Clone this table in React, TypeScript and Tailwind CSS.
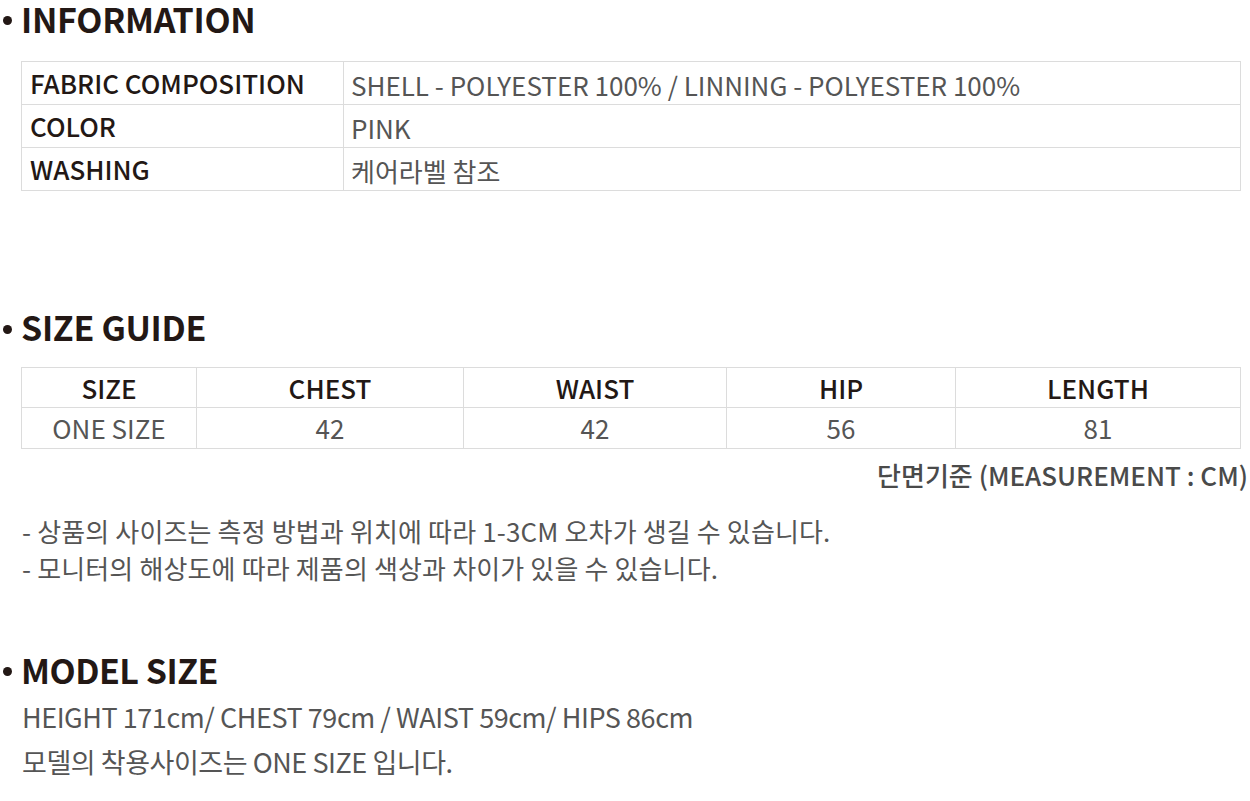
import React from "react";

const font = { fontFamily: '"Noto Sans CJK KR", "Noto Sans", sans-serif' };

function Heading({ children }: { children: React.ReactNode }) {
    return (
        <h2 className="flex items-center text-[34px] font-bold leading-[1.1] text-[#231815]">
            <span className="ml-[3px] mr-[9px] mt-[4px] inline-block h-[9px] w-[9px] shrink-0 rounded-full bg-[#231815]" />
            {children}
        </h2>
    );
}

const info = [
    ["FABRIC COMPOSITION", "SHELL - POLYESTER 100% / LINNING - POLYESTER 100%"],
    ["COLOR", "PINK"],
    ["WASHING", "케어라벨 참조"],
];

const sizeCols = [
    { label: "SIZE", value: "ONE SIZE", w: "w-[175px]" },
    { label: "CHEST", value: "42", w: "w-[267px]" },
    { label: "WAIST", value: "42", w: "w-[263px]" },
    { label: "HIP", value: "56", w: "w-[229px]" },
    { label: "LENGTH", value: "81", w: "flex-1" },
];

export default function App() {
    return (
        <div className="min-h-screen w-[1250px] bg-white" style={font}>
            <Heading>
                <span className="tracking-[-0.3px]">INFORMATION</span>
            </Heading>

            <table className="ml-[21px] mt-[24px] w-[1220px] border-collapse border border-[#dcdcdc]">
                <tbody>
                    {info.map(([k, v]) => (
                        <tr key={k} className="h-[43px]">
                            <td className="w-[322px] border border-[#dcdcdc] pl-[8px] text-[26px] font-medium leading-none text-[#231815]">
                                {k}
                            </td>
                            <td className="border border-[#dcdcdc] pl-[7px] pt-[4px] text-[26px] leading-none text-[#555]">
                                {v}
                            </td>
                        </tr>
                    ))}
                </tbody>
            </table>

            <div className="mt-[117px]">
                <Heading>
                    <span className="tracking-[-0.3px]">SIZE GUIDE</span>
                </Heading>
            </div>

            <div className="ml-[21px] mt-[21px] w-[1220px] border-l border-t border-[#dcdcdc]">
                <div className="flex h-[40px]">
                    {sizeCols.map((c) => (
                        <div
                            key={c.label}
                            className={`${c.w} flex items-center justify-center border-b border-r border-[#dcdcdc] text-[26px] font-medium text-[#231815]`}
                        >
                            {c.label}
                        </div>
                    ))}
                </div>
                <div className="flex h-[41px]">
                    {sizeCols.map((c) => (
                        <div
                            key={c.label}
                            className={`${c.w} flex items-center justify-center border-b border-r border-[#dcdcdc] text-[26px] text-[#555]`}
                        >
                            {c.value}
                        </div>
                    ))}
                </div>
            </div>

            <p className="mt-[13px] pr-[2px] text-right text-[26px] font-medium leading-none text-[#4a4a4a]">
                단면기준 (MEASUREMENT : CM)
            </p>

            <div className="ml-[22px] mt-[24px] text-[26px] leading-[37px] tracking-[0.15px] text-[#555]">
                <p>- 상품의 사이즈는 측정 방법과 위치에 따라 1-3CM 오차가 생길 수 있습니다.</p>
                <p>- 모니터의 해상도에 따라 제품의 색상과 차이가 있을 수 있습니다.</p>
            </div>

            <div className="mt-[65px]">
                <Heading>
                    <span className="tracking-[-0.5px]">MODEL SIZE</span>
                </Heading>
            </div>

            <div className="ml-[22px] mt-[6px] text-[27px] leading-[45px] tracking-[-0.45px] text-[#555]">
                <p>HEIGHT 171cm/ CHEST 79cm / WAIST 59cm/ HIPS 86cm</p>
                <p>모델의 착용사이즈는 ONE SIZE 입니다.</p>
            </div>
        </div>
    );
}
